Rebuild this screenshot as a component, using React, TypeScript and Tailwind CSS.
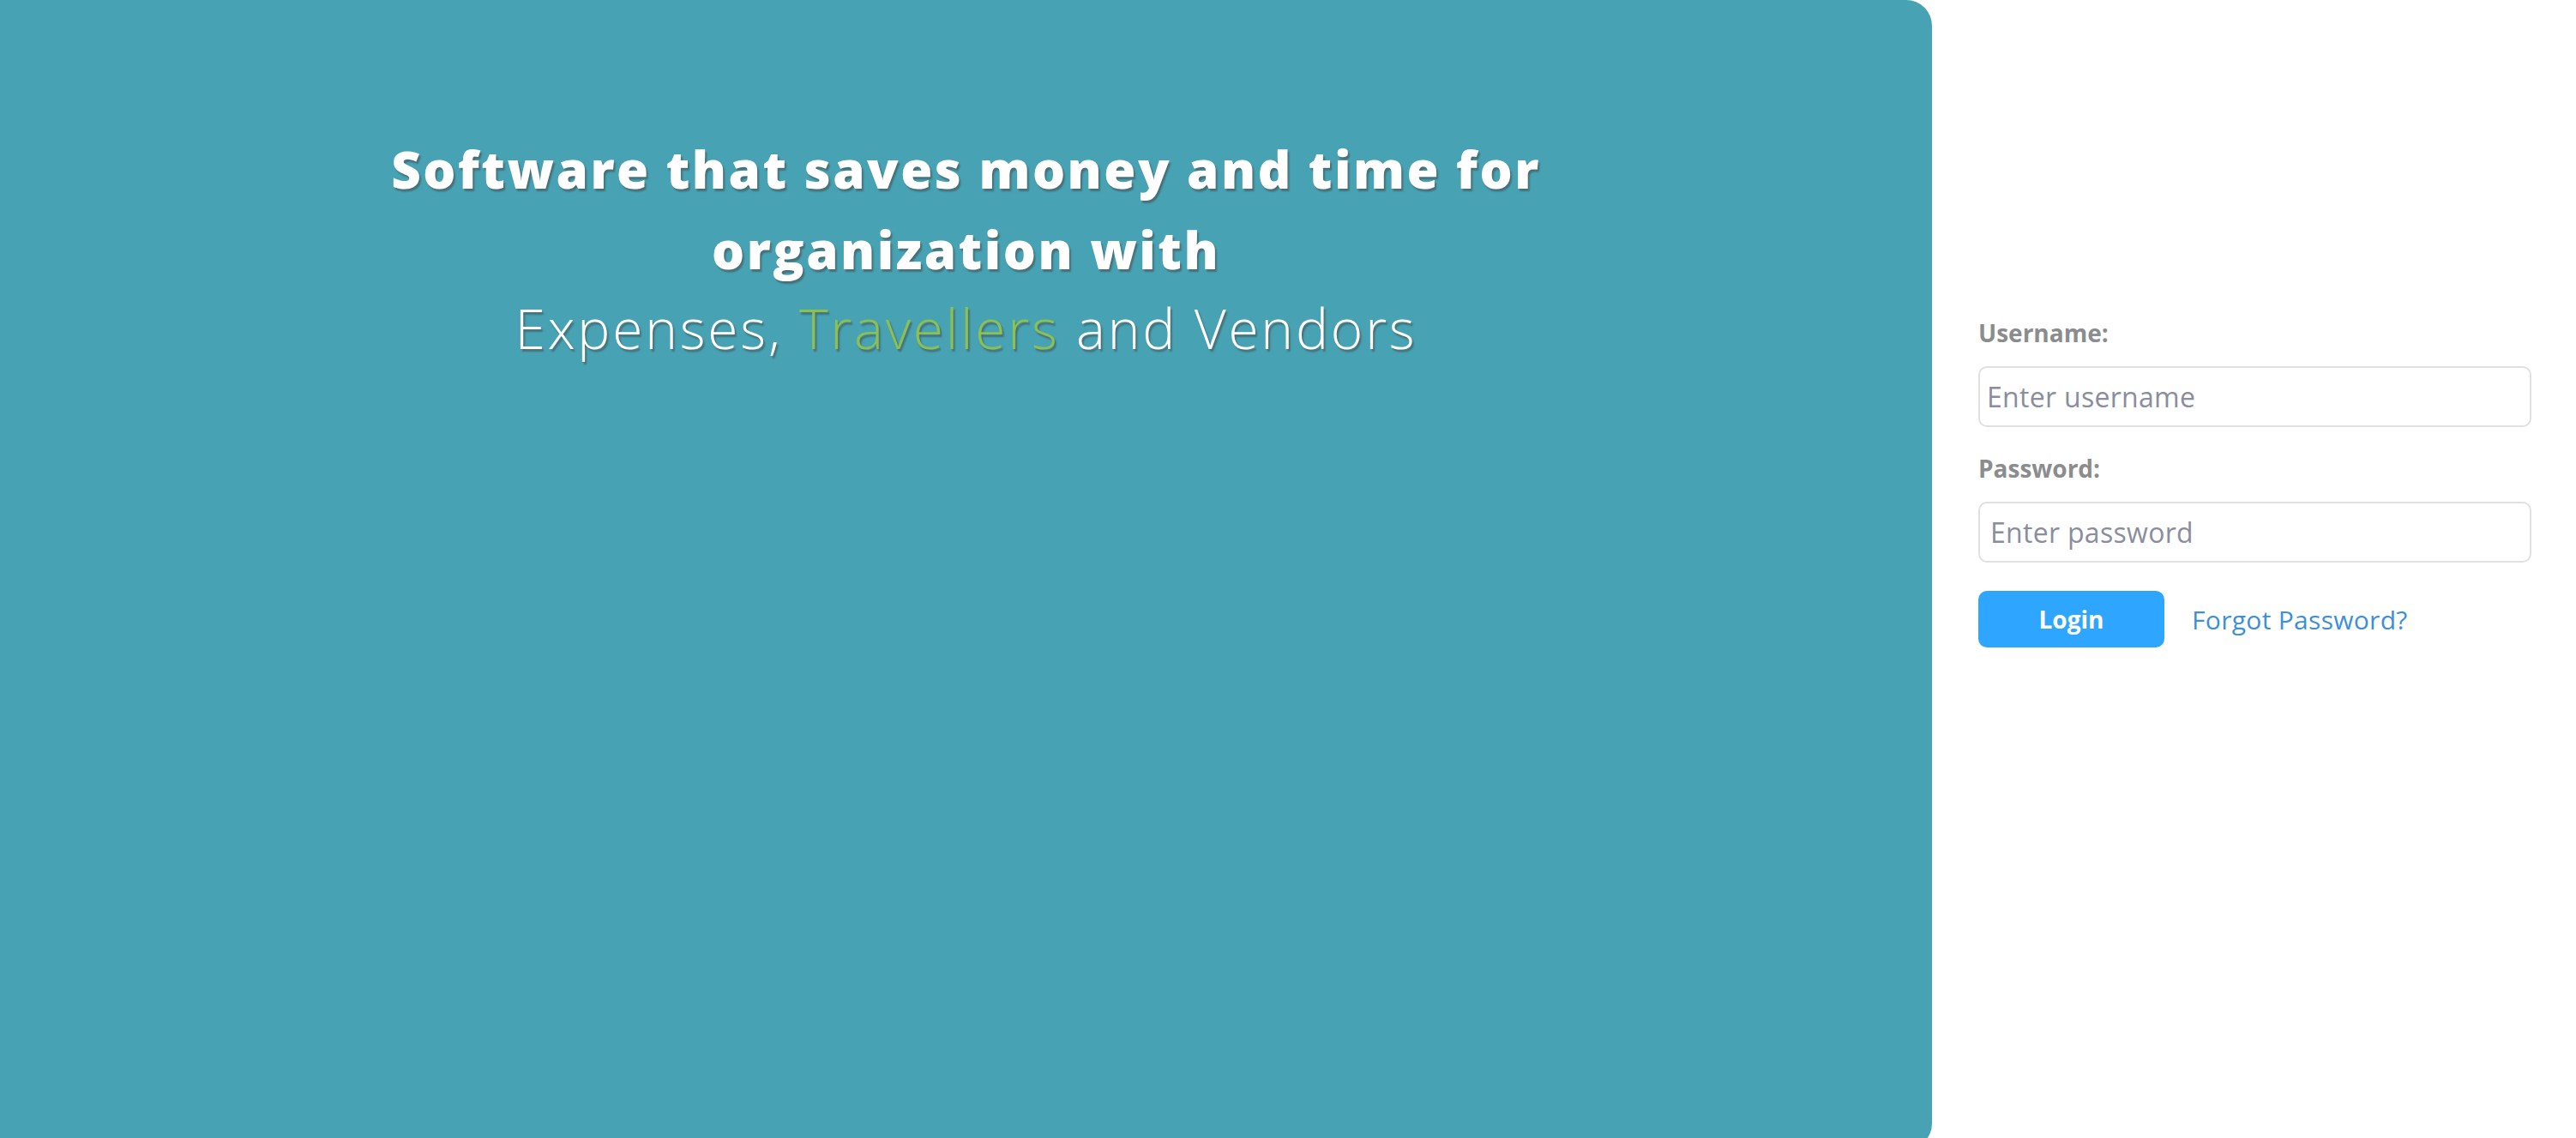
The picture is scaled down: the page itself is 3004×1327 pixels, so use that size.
export default function App() {
  return (
    <div className="flex h-[1327px] w-full overflow-hidden bg-white font-['Open_Sans',sans-serif]">
      <Hero />
      <LoginForm />
    </div>
  );
}

function Hero() {
  return (
    <section className="h-[1340px] w-[2253px] shrink-0 rounded-r-[30px] bg-[#47a3b4] pt-[150px] text-center text-white [text-shadow:2px_3px_2px_rgba(70,70,70,0.55)]">
      <h1 className="mx-auto max-w-[1480px] text-[60px] font-extrabold leading-[94px] tracking-[2.5px]">
        Software that saves money and time for organization with
      </h1>
      <p className="text-[64px] font-light leading-[90px] tracking-[2.8px]">
        Expenses, <span className="text-[#8cc152]">Travellers</span> and Vendors
      </p>
    </section>
  );
}

function LoginForm() {
  return (
    <form className="flex-1 pl-[54px] pr-[52px] pt-[371px]" onSubmit={(e) => e.preventDefault()}>
      <Field label="Username:" placeholder="Enter username" type="text" pad="px-[8px]" />
      <Field label="Password:" placeholder="Enter password" type="password" pad="px-[12px]" />
      <div className="flex items-center pt-[2px]">
        <button
          type="submit"
          className="h-[66px] w-[217px] rounded-[10px] bg-[#2ea6ff] text-[28px] font-bold text-white"
        >
          Login
        </button>
        <a href="#" className="ml-[32px] text-[30px] tracking-[0.3px] text-[#3d8fd8]">
          Forgot Password?
        </a>
      </div>
    </form>
  );
}

function Field({
  label,
  placeholder,
  type,
  pad,
}: {
  label: string;
  placeholder: string;
  type: string;
  pad: string;
}) {
  return (
    <div className="mb-[31px]">
      <label className="mb-[22px] block text-[28px] font-bold leading-[34px] text-[#8a8c8e]">
        {label}
      </label>
      <input
        type={type}
        placeholder={placeholder}
        className={`block h-[71px] w-full rounded-[10px] border-2 border-[#e0e0e0] ${pad} text-[32px] tracking-[0.3px] text-gray-700 outline-none placeholder:text-[#8a8d9e]`}
      />
    </div>
  );
}
